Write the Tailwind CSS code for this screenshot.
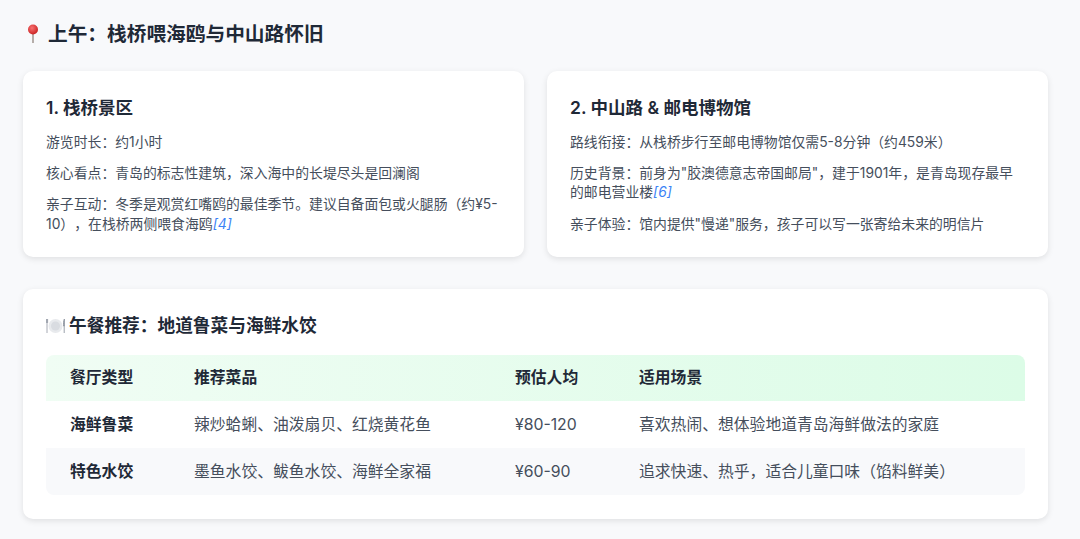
<!DOCTYPE html>
<html lang="zh-CN">
<head>
  <meta charset="UTF-8" />
  <meta name="viewport" content="width=device-width, initial-scale=1" />
  <title>上午：栈桥喂海鸥与中山路怀旧</title>
  <script src="https://cdn.jsdelivr.net/npm/@tailwindcss/browser@4"></script>
</head>
<body class="bg-[#f8f9fb] h-[539px] overflow-hidden font-['Inter','Noto_Sans_CJK_SC',sans-serif] [text-spacing-trim:space-all]">
  <div class="pl-[23px] pr-[32px] pt-[21px]">

    <!-- Section title -->
    <h2 class="flex items-center h-[26px] text-[19.7px] leading-[26px] font-semibold text-[#1f2937]">
      <svg class="w-[18px] h-[20px] mr-[7px]" viewBox="0 0 18 20">
        <defs>
          <radialGradient id="pin" cx="0.4" cy="0.35" r="0.7">
            <stop offset="0" stop-color="#f87171" />
            <stop offset="1" stop-color="#c81e1e" />
          </radialGradient>
        </defs>
        <rect x="9.3" y="9" width="1.4" height="10" fill="#9b8f88" />
        <circle cx="10" cy="5.5" r="5" fill="url(#pin)" />
      </svg>
      上午：栈桥喂海鸥与中山路怀旧
    </h2>

    <!-- Two stops -->
    <div class="grid grid-cols-[501px_501px] gap-[23px] mt-[24px]">
      <div class="bg-white rounded-[10px] shadow-[0_2px_6px_rgba(0,0,0,0.1)] h-[186px] px-[23px] pt-[25px]">
        <h3 class="text-[17.5px] leading-[24px] font-semibold text-[#1f2937]">1. 栈桥景区</h3>
        <p class="mt-[13px] text-[13.85px] leading-[19.5px] text-[#454e5c]">游览时长：约1小时</p>
        <p class="mt-[11px] text-[13.85px] leading-[19.5px] text-[#454e5c]">核心看点：青岛的标志性建筑，深入海中的长堤尽头是回澜阁</p>
        <p class="mt-[12px] text-[13.85px] leading-[19.5px] text-[#454e5c]">亲子互动：冬季是观赏红嘴鸥的最佳季节。建议自备面包或火腿肠（约¥5-10），在栈桥两侧喂食海鸥<a class="italic text-[#3b82f6]">[4]</a></p>
      </div>
      <div class="bg-white rounded-[10px] shadow-[0_2px_6px_rgba(0,0,0,0.1)] h-[186px] px-[23px] pt-[25px]">
        <h3 class="text-[17.5px] leading-[24px] font-semibold text-[#1f2937]">2. 中山路 &amp; 邮电博物馆</h3>
        <p class="mt-[13px] text-[13.85px] leading-[19.5px] text-[#454e5c]">路线衔接：从栈桥步行至邮电博物馆仅需5-8分钟（约459米）</p>
        <p class="mt-[11px] text-[13.85px] leading-[19.5px] text-[#454e5c]">历史背景：前身为"胶澳德意志帝国邮局"，建于1901年，是青岛现存最早的邮电营业楼<a class="italic text-[#3b82f6]">[6]</a></p>
        <p class="mt-[12px] text-[13.85px] leading-[19.5px] text-[#454e5c]">亲子体验：馆内提供"慢递"服务，孩子可以写一张寄给未来的明信片</p>
      </div>
    </div>

    <!-- Lunch card -->
    <div class="mt-[32px] bg-white rounded-[10px] shadow-[0_2px_6px_rgba(0,0,0,0.1)] h-[230px] px-[23px] pt-[24px]">
      <h3 class="flex items-center h-[26px] text-[17.7px] leading-[26px] font-semibold text-[#1f2937]">
        <svg class="w-[19px] h-[18px] mr-[4px]" viewBox="0 0 19 18">
          <circle cx="9.5" cy="9" r="7" fill="#e8eaed" />
          <circle cx="9.5" cy="9" r="4.5" fill="#d9dce1" />
          <path d="M1 2v5M0.4 2v4M1.6 2v4M1 7v9" stroke="#8f96a1" stroke-width="0.8" fill="none" />
          <path d="M18.4 2c-1 2-1 5-0.8 7h0.8zM18.2 9v7" stroke="#8f96a1" stroke-width="0.9" fill="#a3a9b2" />
        </svg>
        午餐推荐：地道鲁菜与海鲜水饺
      </h3>

      <div class="mt-[16px] rounded-lg overflow-hidden">
        <table class="w-full table-fixed text-left text-[15.8px]">
          <colgroup>
            <col class="w-[148px]" />
            <col class="w-[321px]" />
            <col class="w-[124px]" />
            <col />
          </colgroup>
          <thead class="bg-gradient-to-r from-[#f0fdf4] to-[#dcfce7] text-[#1f2937]">
            <tr class="h-[46px]">
              <th class="pl-[24px] font-semibold">餐厅类型</th>
              <th class="font-semibold">推荐菜品</th>
              <th class="font-semibold">预估人均</th>
              <th class="font-semibold">适用场景</th>
            </tr>
          </thead>
          <tbody class="text-[#454e5c]">
            <tr class="h-[47px]">
              <td class="pl-[24px] font-semibold text-[#1f2937]">海鲜鲁菜</td>
              <td>辣炒蛤蜊、油泼扇贝、红烧黄花鱼</td>
              <td>¥80-120</td>
              <td>喜欢热闹、想体验地道青岛海鲜做法的家庭</td>
            </tr>
            <tr class="h-[47px] bg-[#f8f9fb]">
              <td class="pl-[24px] font-semibold text-[#1f2937]">特色水饺</td>
              <td>墨鱼水饺、鲅鱼水饺、海鲜全家福</td>
              <td>¥60-90</td>
              <td>追求快速、热乎，适合儿童口味（馅料鲜美）</td>
            </tr>
          </tbody>
        </table>
      </div>
    </div>

  </div>
</body>
</html>
